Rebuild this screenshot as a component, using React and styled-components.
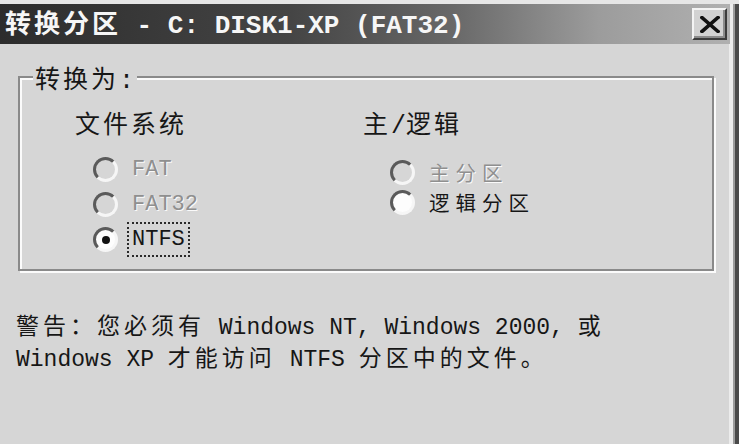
import React from "react";
import styled, { createGlobalStyle } from "styled-components";

const GlobalStyle = createGlobalStyle`
  html, body {
    margin: 0;
    padding: 0;
    background: #d6d6d6;
  }
  body {
    width: 739px;
    height: 444px;
    overflow: hidden;
  }
`;

const Window = styled.div`
  box-sizing: border-box;
  width: 739px;
  height: 444px;
  background: #d6d6d6;
  border-top: 4px solid #e6e6e6;
  box-shadow: inset -4px 0 0 #4a4a4a, inset -6px 0 0 #9c9c9c, inset -10px 0 0 #ececec;
  font-family: "Liberation Mono", "Noto Sans CJK SC", monospace;
  color: #161616;
`;

const TitleBar = styled.div`
  box-sizing: border-box;
  height: 40px;
  margin-right: 9px;
  padding: 0 3px 0 5px;
  display: flex;
  align-items: center;
  justify-content: space-between;
  background: linear-gradient(90deg, #2c2c2c 0%, #454545 40%, #686868 62%, #9c9c9c 82%, #b0b0b0 100%);
`;

const TitleText = styled.div`
  font-size: 26px;
  font-weight: bold;
  line-height: 40px;
  color: #f6f6f6;
  white-space: pre;
`;

const Han = styled.span`
  font-family: "Noto Sans CJK SC", sans-serif;
  letter-spacing: ${(p) => p.$ls}px;
`;

const CloseButton = styled.div`
  box-sizing: border-box;
  width: 35px;
  height: 32px;
  display: flex;
  align-items: center;
  justify-content: center;
  background: #d2d2d2;
  border: 2px solid;
  border-color: #f4f4f4 #3c3c3c #3c3c3c #f4f4f4;
  box-shadow: inset -2px -2px 0 #8c8c8c;
`;

const Body = styled.div`
  padding-top: 32px;
`;

const Group = styled.div`
  position: relative;
  box-sizing: border-box;
  width: 696px;
  height: 195px;
  margin-left: 18px;
  padding: 29px 0 0 55px;
  border: 2px solid #8a8a8a;
  box-shadow: inset 2px 2px 0 #fbfbfb, 2px 2px 0 #fbfbfb;
`;

const Legend = styled.div`
  position: absolute;
  top: -14px;
  left: 13px;
  padding: 0 3px 0 2px;
  font-size: 25px;
  line-height: 26px;
  background: #d6d6d6;
`;

const Columns = styled.div`
  display: grid;
  grid-template-columns: 288px 1fr;
`;

const Column = styled.div`
  display: flex;
  flex-direction: column;
`;

const Heading = styled.div`
  height: 30px;
  font-size: 25px;
  line-height: 30px;
  white-space: pre;
`;

const Options = styled.div`
  display: flex;
  flex-direction: column;
  padding: ${(p) => p.$top}px 0 0 ${(p) => p.$indent}px;
`;

const Option = styled.div`
  height: ${(p) => p.$row}px;
  display: flex;
  align-items: center;
  gap: 9px;
`;

const Radio = styled.span`
  position: relative;
  flex: none;
  box-sizing: border-box;
  width: 25px;
  height: 25px;
  border-radius: 50%;
  border: 3px solid;
  border-color: #5a5a5a #f6f6f6 #f6f6f6 #5a5a5a;
  background: ${(p) => (p.$disabled ? "#d6d6d6" : "#fdfdfd")};

  &::after {
    content: "";
    display: ${(p) => (p.$checked ? "block" : "none")};
    position: absolute;
    left: 50%;
    top: 50%;
    width: 8px;
    height: 8px;
    margin: -4px 0 0 -4px;
    border-radius: 50%;
    background: #111;
  }
`;

const Label = styled.span`
  box-sizing: border-box;
  flex: none;
  height: ${(p) => p.$row}px;
  display: inline-flex;
  align-items: center;
  padding: 0 3px;
  border: 2px dotted ${(p) => (p.$focus ? "#2a2a2a" : "transparent")};
  font-size: 22px;
  line-height: 24px;
  white-space: pre;
  color: ${(p) => (p.$disabled ? "#8f8f8f" : "#161616")};
  text-shadow: ${(p) => (p.$disabled ? "1px 1px 0 #fafafa" : "none")};

  ${Han} {
    font-size: 20.5px;
    line-height: 24px;
  }
`;

const Warning = styled.div`
  margin-top: 39px;
  padding-left: 16px;
  font-size: 23px;
`;

const Line = styled.div`
  height: 32px;
  line-height: 28px;
  white-space: pre;
`;

const fileSystems = [
  { text: "FAT", disabled: true },
  { text: "FAT32", disabled: true },
  { text: "NTFS", checked: true, focus: true },
];

const partitionKinds = [
  { text: "主分区", han: true, disabled: true },
  { text: "逻辑分区", han: true },
];

function OptionRow({ item, row }) {
  return (
    <Option $row={row}>
      <Radio $disabled={item.disabled} $checked={item.checked} />
      <Label $row={row} $disabled={item.disabled} $focus={item.focus}>
        {item.han ? <Han $ls={6}>{item.text}</Han> : item.text}
      </Label>
    </Option>
  );
}

export default function App() {
  return (
    <>
      <GlobalStyle />
      <Window>
        <TitleBar>
          <TitleText>
            <Han $ls={3}>转换分区</Han> - C: DISK1-XP (FAT32)
          </TitleText>
          <CloseButton aria-label="关闭">
            <svg width="20" height="17" viewBox="0 0 20 17">
              <path d="M2 1.5 L18 15.5 M18 1.5 L2 15.5" stroke="#111" strokeWidth="3.6" strokeLinecap="square" />
            </svg>
          </CloseButton>
        </TitleBar>
        <Body>
          <Group>
            <Legend>
              <Han $ls={3}>转换为</Han>:
            </Legend>
            <Columns>
              <Column>
                <Heading>
                  <Han $ls={3}>文件系统</Han>
                </Heading>
                <Options $indent={18} $top={15}>
                  {fileSystems.map((item) => (
                    <OptionRow key={item.text} item={item} row={35} />
                  ))}
                </Options>
              </Column>
              <Column>
                <Heading>
                  <Han $ls={3}>主</Han>/<Han $ls={3}>逻辑</Han>
                </Heading>
                <Options $indent={27} $top={20}>
                  {partitionKinds.map((item) => (
                    <OptionRow key={item.text} item={item} row={30} />
                  ))}
                </Options>
              </Column>
            </Columns>
          </Group>
          <Warning>
            <Line>
              <Han $ls={4}>警告：您必须有</Han> Windows NT, Windows 2000, <Han $ls={4}>或</Han>
            </Line>
            <Line>
              Windows XP <Han $ls={4}>才能访问</Han> NTFS <Han $ls={4}>分区中的文件。</Han>
            </Line>
          </Warning>
        </Body>
      </Window>
    </>
  );
}
